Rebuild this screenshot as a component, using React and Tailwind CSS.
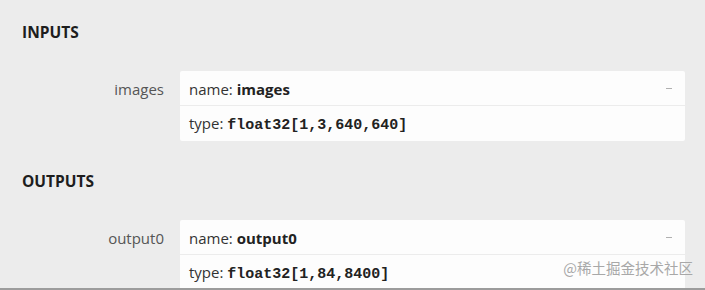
import React from "react";

const sans = { fontFamily: '"Open Sans", "Noto Sans", sans-serif' };

function Card({ name, type }) {
  return (
    <div className="w-[505px] bg-[#fdfdfd] rounded-[2px] text-[15px] text-[#333]">
      <div className="h-[35px] flex items-center pl-[9px] pr-[13px] pt-[1px] border-b border-[#ececec]">
        <span className="leading-[20px]">
          name: <b className="font-bold text-[#222]">{name}</b>
        </span>
        <span className="ml-auto w-[6px] h-[1px] bg-[#b0b0b0]" />
      </div>
      <div className="h-[35px] flex items-center pl-[9px] pt-[1px]">
        <span className="leading-[20px]">
          type:{" "}
          <b
            className="font-bold text-[#222]"
            style={{ fontFamily: '"Liberation Mono", monospace' }}
          >
            {type}
          </b>
        </span>
      </div>
    </div>
  );
}

function Section({ title, label, name, type, mt }) {
  return (
    <div className={mt}>
      <div className="pl-[22px] text-[15.5px] font-bold text-[#1d1d1d] leading-[20px]">{title}</div>
      <div className="flex mt-[29px]">
        <div className="w-[164px] text-right text-[15px] text-[#555] pt-[8px] leading-[20px]">{label}</div>
        <div className="ml-[16px]">
          <Card name={name} type={type} />
        </div>
      </div>
    </div>
  );
}

export default function App() {
  return (
    <div
      className="w-[705px] h-[290px] bg-[#ececec] overflow-hidden relative border-b-2 border-[#9c9c9c]"
      style={sans}
    >
      <div className="pt-[22px]">
        <Section title="INPUTS" label="images" name="images" type="float32[1,3,640,640]" />
        <Section title="OUTPUTS" label="output0" name="output0" type="float32[1,84,8400]" mt="mt-[30px]" />
      </div>
      <div
        className="absolute right-[12px] bottom-[9px] text-[14.5px] text-[#a8a8a8]"
        style={{ fontFamily: '"Noto Sans CJK SC", sans-serif' }}
      >
        @稀土掘金技术社区
      </div>
    </div>
  );
}
